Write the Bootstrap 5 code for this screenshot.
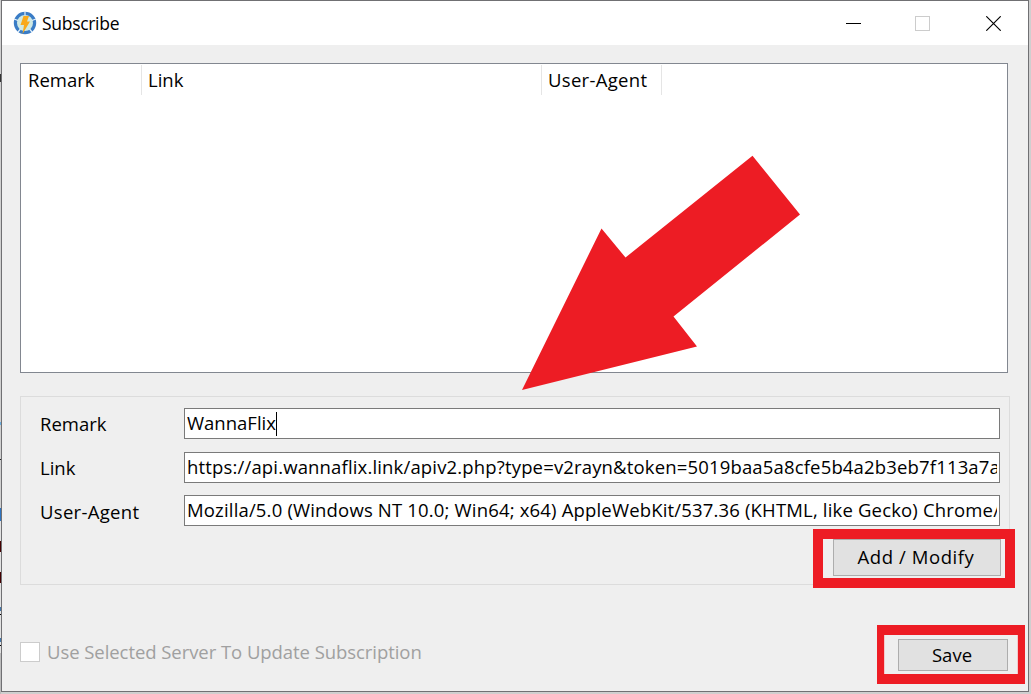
<!DOCTYPE html>
<html lang="en">
<head>
<meta charset="utf-8">
<meta name="viewport" content="width=device-width, initial-scale=1">
<title>Subscribe</title>
<link href="https://cdn.jsdelivr.net/npm/bootstrap@5.3.0/dist/css/bootstrap.min.css" rel="stylesheet">
<style>
:root { --red: #ed1c24; }
html, body { height: 100%; }
body {
  font-family: "Open Sans", "Noto Sans", sans-serif;
  font-size: 18.5px; line-height: 28px; color: #000;
  background: linear-gradient(90deg, transparent 1px, #cfcfcf 1px),
    linear-gradient(#d0d0d0 74px, #333 74px 82px, #d0d0d0 82px 422px, #6aaee0 422px 425px, #d0d0d0 425px 459px, #222 459px 460px, #d0d0d0 460px 508px, #2f74c0 508px 521px, #e2e2e2 521px 541px, #400 541px 552px, #e2e2e2 552px 572px, #400 572px 583px, #e2e2e2 583px 607px, #47a 607px 611px, #e2e2e2 611px 614px, #000 614px 615px, #e2e2e2 615px 638px, #47a 638px 642px, #e2e2e2 642px 645px, #000 645px 646px, #e2e2e2 646px 653px, #bcbcbc 653px);
}
.window { width: 1028px; height: 692px; margin-left: 1px; border: 1px solid #707073; background: #efefef; }
.titlebar { height: 44px; padding-left: 11px; }
.titlebar .caption { font-size: 17.5px; letter-spacing: -.3px; margin-left: 5px; }
.controls { width: 155px; margin-right: 27px; }
.controls .maximize { margin-right: 2px; }
.client { padding: 18px 0 0 18px; }
.listview { width: 988px; height: 310px; border: 1px solid #828790; background: #fff; padding-top: 1px; }
.column-head { height: 30px; border-right: 1px solid #e5e5e5; padding: 1px 0 0 7px; }
.column-head + .column-head { padding-left: 6px; }
.w-narrow { width: 121px; } .w-link { width: 400px; } .w-agent { width: 120px; }
.agent-text { letter-spacing: .3px; }
.groupbox { width: 990px; height: 189px; margin-top: 23px; border: 1px solid #dcdcdc; padding: 11px 9px 0 19px; }
.field { display: grid; grid-template-columns: 144px 816px; height: 31px; margin-bottom: 13px; }
.field.last { margin-top: -1px; }
.field label { padding-top: 2px; }
.field.last label { padding-top: 3px; }
.entry { border: 1px solid #7a7a7a; background: #fff; padding: 0 2px; height: 31px; }
.entry > div { overflow: hidden; white-space: nowrap; height: 29px; }
.url { letter-spacing: .16px; }
.ua { letter-spacing: .17px; }
.caret { display: inline-block; width: 1px; height: 24px; background: #000; vertical-align: -6px; }
.win-btn { background: #e1e1e1; border: 1px solid #adadad; border-radius: 0; padding: 0; color: #000; font-size: inherit; line-height: 28px; }
.btn-add { width: 168px; height: 37px; letter-spacing: .58px; padding: 0 2px 2px 0; }
.btn-save { width: 110px; height: 32px; padding-right: 2px; }
.actions { margin: 0 -1px 0 0; }
.mark-add, .mark-save { position: absolute; border: 10px solid var(--red); pointer-events: none; }
.mark-add { inset: -10px -14px -12px -20px; }
.mark-save { inset: -14px -17px -13px -21px; border-width: 10px 7px; box-shadow: inset 1px 0 0 #f3c9cb, inset -1px 0 0 #f3c9cb; }
.footer-row { width: 988px; margin-top: 54px; }
.tick { width: 20px; height: 20px; border: 1px solid #ccc; background: #fff; margin: 3px 7px 0 0; }
.disabled-text { color: #a0a0a0; letter-spacing: -.06px; margin-top: -1px; }
.arrow { left: 522px; top: 155px; pointer-events: none; }
</style>
</head>
<body class="overflow-hidden position-relative">
<main class="window">
  <header class="titlebar bg-white d-flex align-items-center">
    <svg width="24" height="24" viewBox="0 0 24 24" aria-hidden="true">
      <circle cx="12" cy="12" r="9.6" fill="#cfe9e4" stroke="#3a7cc6" stroke-width="3.2"/>
      <path d="M12 0v4M1 8l4 1.500M23 8l-4 1.500M5 21l2.500-3M19 21l-2.500-3" stroke="#e4f1fb" stroke-width="1.200"/>
      <path d="M10.500 5h5.500l-2 5.500h3L9.500 23l1.500-9H7.500z" fill="#f9a91b"/>
    </svg>
    <span class="caption">Subscribe</span>
    <div class="controls ms-auto d-flex justify-content-between align-items-center">
      <svg width="15" height="15"><path d="M0 7.500h15" stroke="#000"/></svg>
      <svg class="maximize" width="15" height="15"><rect x=".5" y=".5" width="14" height="14" fill="none" stroke="#ccc"/></svg>
      <svg width="15" height="15"><path d="M.3.3l14.400 14.400M14.700.3L.3 14.700" stroke="#000" stroke-width="1.150"/></svg>
    </div>
  </header>
  <section class="client">
    <div class="listview">
      <div class="d-flex">
        <div class="column-head w-narrow"><span>Remark</span></div>
        <div class="column-head w-link"><span>Link</span></div>
        <div class="column-head w-agent"><span class="agent-text">User-Agent</span></div>
      </div>
    </div>
    <div class="groupbox">
      <div class="field"><label><span>Remark</span></label><div class="entry"><div><span>WannaFlix</span><i class="caret"></i></div></div></div>
      <div class="field"><label><span>Link</span></label><div class="entry"><div><span class="url">https://api.wannaflix.link/apiv2.php?type=v2rayn&amp;token=5019baa5a8cfe5b4a2b3eb7f113a7a</span></div></div></div>
      <div class="field last"><label><span class="agent-text">User-Agent</span></label><div class="entry"><div><span class="ua">Mozilla/5.0 (Windows NT 10.0; Win64; x64) AppleWebKit/537.36 (KHTML, like Gecko) Chrome/</span></div></div></div>
      <div class="actions d-flex justify-content-end"><div class="position-relative"><button class="btn win-btn btn-add d-block">Add / Modify</button><div class="mark-add"></div></div></div>
    </div>
    <div class="footer-row d-flex align-items-start">
      <div class="tick"></div><span class="disabled-text">Use Selected Server To Update Subscription</span>
      <div class="position-relative ms-auto"><button class="btn win-btn btn-save d-block">Save</button><div class="mark-save"></div></div>
    </div>
  </section>
</main>
<svg class="arrow position-absolute" width="279" height="236" aria-hidden="true"><path d="M0 235L79.500 73.500L103.500 102.500L230.500.7L278 59.500L151.500 161.500L175 191.500Z" fill="#ed1c24"/></svg>
<script src="https://cdn.jsdelivr.net/npm/bootstrap@5.3.0/dist/js/bootstrap.bundle.min.js"></script>
</body>
</html>
